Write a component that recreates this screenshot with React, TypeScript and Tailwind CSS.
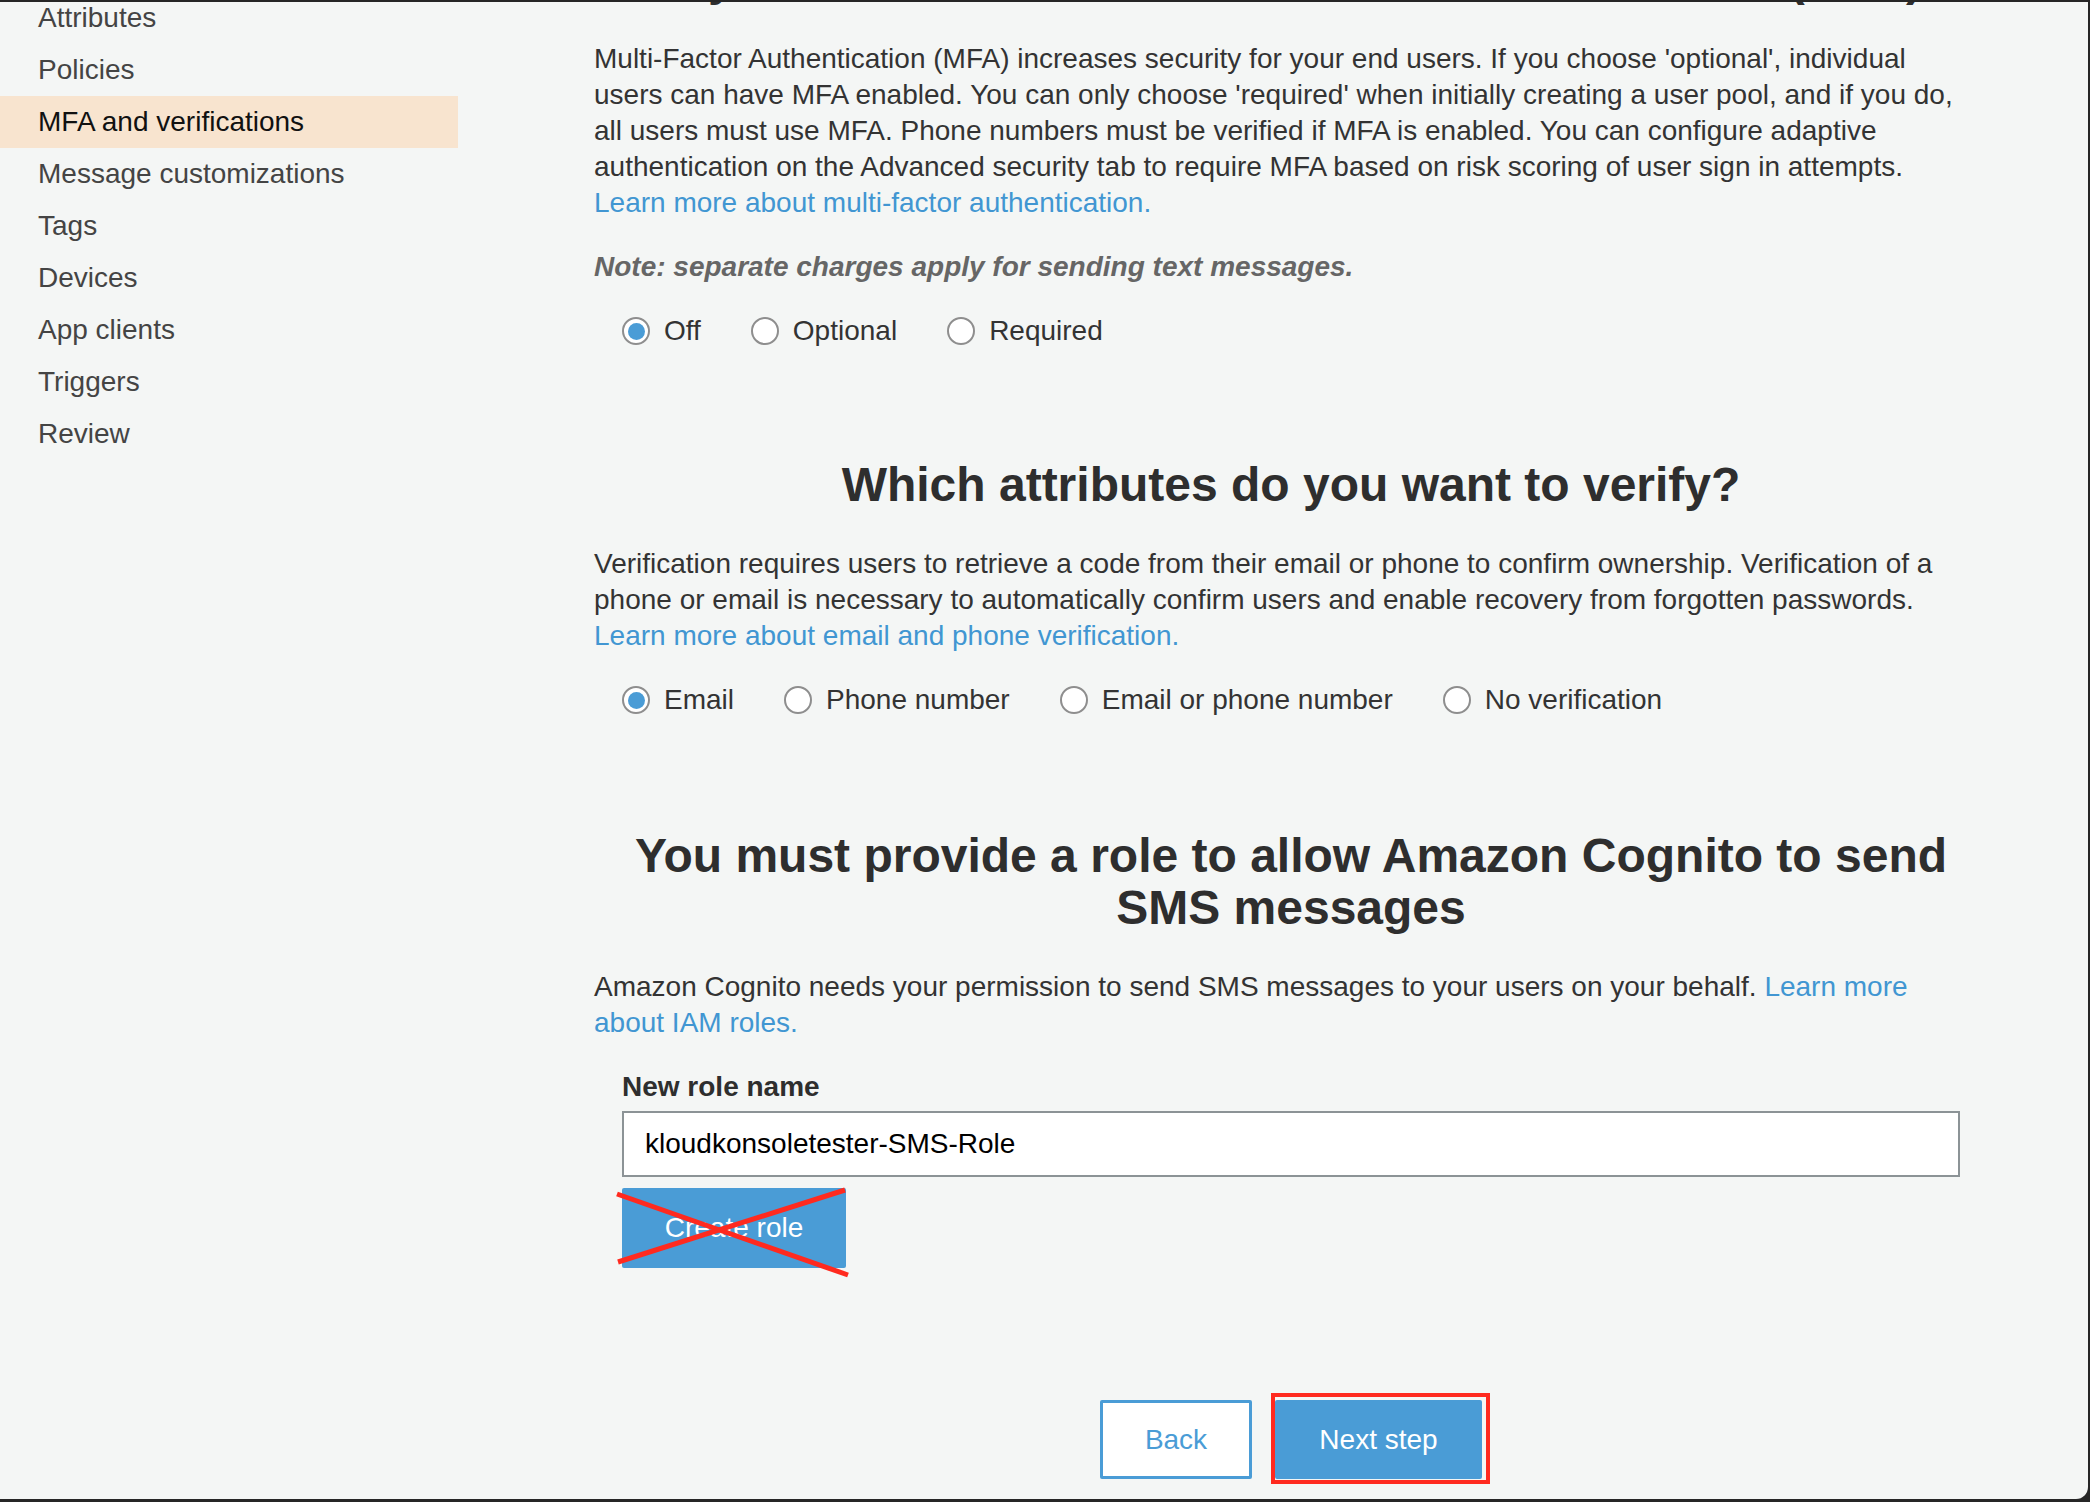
import React from 'react';

const navItems = [
  'Attributes',
  'Policies',
  'MFA and verifications',
  'Message customizations',
  'Tags',
  'Devices',
  'App clients',
  'Triggers',
  'Review',
];

function Radio({ label, checked }: { label: string; checked?: boolean }) {
  return (
    <label className="flex items-center gap-[14px]">
      <span className="flex h-[28px] w-[28px] items-center justify-center rounded-full border-2 border-[#8e8e8e] bg-white">
        {checked && <span className="h-[17px] w-[17px] rounded-full bg-[#4a9cd6]" />}
      </span>
      <span>{label}</span>
    </label>
  );
}

export default function App() {
  return (
    <div className="h-[1502px] w-[2090px] overflow-hidden bg-[#262626] pt-[2px] pr-[2px] pb-[3px] font-['Liberation_Sans',Arial,sans-serif] text-[#333]">
      <div className="flex h-full overflow-hidden rounded-br-[12px] bg-[#f4f6f5]">
        {/* Left nav */}
        <aside className="-mt-[10px] w-[458px] shrink-0">
          {navItems.map((item) => (
            <div
              key={item}
              className={
                item === 'MFA and verifications'
                  ? 'flex h-[52px] items-center bg-[#f8e4cf] pl-[38px] text-[28px] text-[#111]'
                  : 'flex h-[52px] items-center pl-[38px] text-[28px] text-[#444]'
              }
            >
              {item}
            </div>
          ))}
        </aside>

        {/* Main column */}
        <main className="ml-[136px] w-[1394px] shrink-0">
          <h2 className="-mt-[49px] text-center text-[48px] font-bold leading-[52px] text-[#2e2e2e]">
            Do you want to enable Multi-Factor Authentication (MFA)?
          </h2>

          <p className="mt-[36px] text-[28px] leading-[36px]">
            Multi-Factor Authentication (MFA) increases security for your end users. If you choose 'optional', individual
            <br />
            users can have MFA enabled. You can only choose 'required' when initially creating a user pool, and if you do,
            <br />
            all users must use MFA. Phone numbers must be verified if MFA is enabled. You can configure adaptive
            <br />
            authentication on the Advanced security tab to require MFA based on risk scoring of user sign in attempts.
            <br />
            <a className="text-[#4196d2]" href="#">Learn more about multi-factor authentication.</a>
          </p>

          <p className="mt-[28px] text-[28px] font-bold italic leading-[36px] text-[#666]">
            Note: separate charges apply for sending text messages.
          </p>

          <div className="mt-[28px] flex h-[36px] items-center gap-[50px] pl-[28px] text-[28px]">
            <Radio label="Off" checked />
            <Radio label="Optional" />
            <Radio label="Required" />
          </div>

          <h2 className="mt-[110px] text-center text-[48px] font-bold leading-[52px] text-[#2e2e2e]">
            Which attributes do you want to verify?
          </h2>

          <p className="mt-[35px] text-[28px] leading-[36px]">
            Verification requires users to retrieve a code from their email or phone to confirm ownership. Verification of a
            <br />
            phone or email is necessary to automatically confirm users and enable recovery from forgotten passwords.
            <br />
            <a className="text-[#4196d2]" href="#">Learn more about email and phone verification.</a>
          </p>

          <div className="mt-[28px] flex h-[36px] items-center gap-[50px] pl-[28px] text-[28px]">
            <Radio label="Email" checked />
            <Radio label="Phone number" />
            <Radio label="Email or phone number" />
            <Radio label="No verification" />
          </div>

          <h2 className="mt-[112px] text-center text-[48px] font-bold leading-[52px] text-[#2e2e2e]">
            You must provide a role to allow Amazon Cognito to send SMS messages
          </h2>

          <p className="mt-[35px] text-[28px] leading-[36px]">
            Amazon Cognito needs your permission to send SMS messages to your users on your behalf.{' '}
            <a className="text-[#4196d2]" href="#">
              Learn more
              <br />
              about IAM roles.
            </a>
          </p>

          <div className="mt-[28px] pl-[28px] text-[28px] font-bold leading-[36px] text-[#2e2e2e]">New role name</div>
          <div className="mx-[28px] mt-[6px] flex h-[66px] items-center border-2 border-[#8c9396] bg-white pl-[21px] text-[28px] text-black">
            kloudkonsoletester-SMS-Role
          </div>

          <div className="relative mt-[11px] ml-[28px] w-[224px]">
            <button className="flex h-[80px] w-[224px] items-center justify-center rounded-[2px] bg-[#4a9cd6] text-[28px] text-white">
              Create role
            </button>
            <svg className="absolute -left-[10px] -top-[10px]" width="250" height="110" viewBox="0 0 250 110">
              <line x1="5" y1="16" x2="236" y2="97" stroke="#ff2a1f" strokeWidth="5" />
              <line x1="6" y1="84" x2="233" y2="12" stroke="#ff2a1f" strokeWidth="5" />
            </svg>
          </div>

          <div className="mt-[132px] flex justify-center gap-[23px]">
            <button className="flex h-[79px] w-[152px] items-center justify-center rounded-[2px] border-[3px] border-[#4a9cd6] bg-white text-[28px] text-[#4a9cd6]">
              Back
            </button>
            <div className="relative">
              <button className="flex h-[79px] w-[207px] items-center justify-center rounded-[2px] bg-[#4a9cd6] text-[28px] text-white">
                Next step
              </button>
              <div className="absolute -top-[7px] -right-[8px] -bottom-[5px] -left-[4px] border-4 border-[#ff2a1f]" />
            </div>
          </div>
        </main>
      </div>
    </div>
  );
}
